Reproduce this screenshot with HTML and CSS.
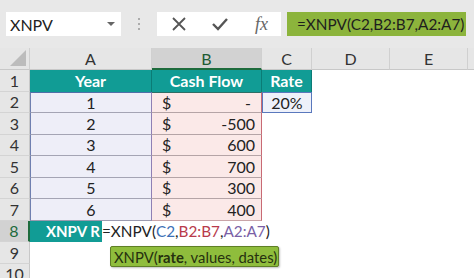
FILE: index.html
```html
<!DOCTYPE html>
<html>
<head>
    <meta charset="utf-8">
    <link rel="stylesheet" href="styles.css">
</head>
<body>
    <div class="toolbar">
        <div class="namebox">
            <span>XNPV</span>
            <span class="caret"></span>
        </div>
        <div class="grip"><i></i><i></i><i></i></div>
        <div class="fbuttons">
            <svg width="16" height="16" viewBox="0 0 16 16"><path d="M2 2 L14 14 M14 2 L2 14" stroke="#555" stroke-width="1.8" fill="none"/></svg>
            <svg width="18" height="16" viewBox="0 0 18 16"><path d="M2 8 L7 13 L16 3" stroke="#555" stroke-width="2.4" fill="none"/></svg>
            <span class="fx">fx</span>
        </div>
        <div class="formula">=XNPV(C2,B2:B7,A2:A7)</div>
    </div>

    <div class="sheet">
        <!-- column headers -->
        <div class="corner"><span class="tri"></span></div>
        <div class="colhead">A</div>
        <div class="colhead active">B</div>
        <div class="colhead">C</div>
        <div class="colhead">D</div>
        <div class="colhead">E</div>
        <div class="colhead last"></div>

        <!-- row 1 -->
        <div class="rowhead">1</div>
        <div class="cell title">Year</div>
        <div class="cell title">Cash Flow</div>
        <div class="cell title">Rate</div>
        <div class="cell"></div><div class="cell"></div><div class="cell"></div>

        <!-- row 2 -->
        <div class="rowhead">2</div>
        <div class="cell year first">1</div>
        <div class="cell cash first"><span>$</span><span>-&nbsp;</span></div>
        <div class="cell rate">20%</div>
        <div class="cell"></div><div class="cell"></div><div class="cell"></div>

        <div class="rowhead">3</div>
        <div class="cell year">2</div>
        <div class="cell cash"><span>$</span><span>-500</span></div>
        <div class="cell"></div><div class="cell"></div><div class="cell"></div><div class="cell"></div>

        <div class="rowhead">4</div>
        <div class="cell year">3</div>
        <div class="cell cash"><span>$</span><span>600</span></div>
        <div class="cell"></div><div class="cell"></div><div class="cell"></div><div class="cell"></div>

        <div class="rowhead">5</div>
        <div class="cell year">4</div>
        <div class="cell cash"><span>$</span><span>700</span></div>
        <div class="cell"></div><div class="cell"></div><div class="cell"></div><div class="cell"></div>

        <div class="rowhead">6</div>
        <div class="cell year">5</div>
        <div class="cell cash"><span>$</span><span>300</span></div>
        <div class="cell"></div><div class="cell"></div><div class="cell"></div><div class="cell"></div>

        <div class="rowhead">7</div>
        <div class="cell year lastrow">6</div>
        <div class="cell cash lastrow"><span>$</span><span>400</span></div>
        <div class="cell"></div><div class="cell"></div><div class="cell"></div><div class="cell"></div>

        <div class="rowhead active">8</div>
        <div class="cell label"><span>XNPV R</span></div>
        <div class="cell current"></div>
        <div class="cell"></div><div class="cell"></div><div class="cell"></div><div class="cell"></div>

        <div class="rowhead">9</div>
        <div class="cell"></div><div class="cell"></div><div class="cell"></div><div class="cell"></div><div class="cell"></div><div class="cell"></div>

        <div class="rowhead">10</div>
        <div class="cell"></div><div class="cell"></div><div class="cell"></div><div class="cell"></div><div class="cell"></div><div class="cell"></div>

        <!-- in-cell editor and argument tip -->
        <div class="editor">=XNPV(<span class="ref-c">C2</span>,<span class="ref-b">B2:B7</span>,<span class="ref-a">A2:A7</span>)</div>
        <div class="argtip">XNPV(<b>rate</b>, values, dates)</div>
    </div>
</body>
</html>
```

FILE: styles.css
```css
body {
    width: 474px;
    height: 278px;
    margin: 0;
    overflow: hidden;
    font-family: Lato, 'Noto Sans', sans-serif;
    font-size: 16px;
    color: #222;
    background: #fff;
}

.toolbar {
    height: 48px;
    background: #e8e8e8;
    display: flex;
    align-items: center;
    padding: 0 8px 0 6px;
    box-sizing: border-box;
}

.namebox {
    width: 115px;
    height: 24px;
    background: #fff;
    display: flex;
    align-items: center;
    justify-content: space-between;
    padding: 0 6px 0 4px;
    box-sizing: border-box;
    font-size: 16px;
    color: #222;
}

.caret {
    width: 0;
    height: 0;
    border-left: 4px solid transparent;
    border-right: 4px solid transparent;
    border-top: 4px solid #666;
}

.grip {
    width: 36px;
    display: flex;
    flex-direction: column;
    align-items: center;
    gap: 3px;
}

.grip i {
    width: 2px;
    height: 2px;
    background: #999;
    border-radius: 1px;
}

.fbuttons {
    width: 124px;
    height: 24px;
    background: #fff;
    display: flex;
    align-items: center;
    padding-left: 14px;
    gap: 24px;
    box-sizing: border-box;
}

.fx {
    font-family: 'Liberation Serif', serif;
    font-style: italic;
    font-size: 18px;
    color: #666;
    margin-left: 2px;
}

.formula {
    margin-left: 6px;
    width: 179px;
    height: 24px;
    background: #8cb43c;
    color: #1e1e1e;
    display: flex;
    align-items: center;
    padding-left: 10px;
    box-sizing: border-box;
    white-space: nowrap;
    font-size: 15.3px;
}

.sheet {
    position: relative;
    display: grid;
    grid-template-columns: 30px 122px 110px 50px 78px 78px 1fr;
    grid-template-rows: 22px repeat(10, 21.5px);
}

.corner {
    background: #e6e6e6;
    border-right: 1px solid #d0d0d0;
    border-bottom: 1px solid #c8c8c8;
    box-sizing: border-box;
    position: relative;
}

.tri {
    position: absolute;
    right: 3px;
    bottom: 3px;
    width: 0;
    height: 0;
    border-left: 16px solid transparent;
    border-bottom: 16px solid #bcbcbc;
}

.colhead {
    background: #e6e6e6;
    border-right: 1px solid #d0d0d0;
    border-bottom: 1px solid #c8c8c8;
    box-sizing: border-box;
    display: flex;
    align-items: center;
    justify-content: center;
    color: #333;
}

.colhead.active {
    background: #d2d2d2;
    border-bottom: 2px solid #1d6b3c;
    color: #1d5b34;
}

.colhead.last {
    border-right: none;
}

.rowhead {
    background: #e6e6e6;
    border-right: 1px solid #c8c8c8;
    border-bottom: 1px solid #d4d4d4;
    box-sizing: border-box;
    display: flex;
    align-items: center;
    justify-content: center;
    color: #333;
}

.rowhead.active {
    background: #d2d2d2;
    border-right: 2px solid #1d6b3c;
    color: #1d6b3c;
}

.cell {
    box-sizing: border-box;
    display: flex;
    align-items: center;
    white-space: nowrap;
    overflow: hidden;
}

.title {
    background: #119c95;
    color: #fff;
    font-weight: bold;
    justify-content: center;
    border-right: 1px solid #0b7c76;
}

.year {
    background: #eeeef8;
    justify-content: center;
    border-left: 1px solid #6f7fb0;
    border-right: 1px solid #8f80b4;
    border-bottom: 1px solid #a4a4b4;
}

.cash {
    background: #fbe9e8;
    justify-content: space-between;
    padding: 0 6px 0 10px;
    border-right: 1px solid #c86a74;
    border-bottom: 1px solid #b5a4a6;
}

.first {
    border-top: 1px solid #4f6fa8;
}

.cash.first {
    border-top: 1px solid #2d6e66;
}

.lastrow {
    border-bottom: 1px solid #9b9bb0;
}

.cash.lastrow {
    border-bottom: 1px solid #c9a4a8;
}

.rate {
    background: #eef1fa;
    justify-content: center;
    border: 1px solid #5a78bd;
}

.label {
    background: #119c95;
    color: #fff;
    font-weight: bold;
    font-size: 15px;
    padding-left: 16px;
}

.current {
    border-bottom: 2px solid #1d6b3c;
}

.editor {
    position: absolute;
    left: 102px;
    top: 172.5px;
    width: 163px;
    height: 21px;
    background: #fff;
    display: flex;
    align-items: center;
    white-space: nowrap;
    color: #222;
    font-size: 15.3px;
}

.ref-c { color: #3b6fb6; }
.ref-b { color: #b83a4b; }
.ref-a { color: #7a5fa6; }

.argtip {
    position: absolute;
    left: 110px;
    top: 198px;
    width: 169px;
    height: 21px;
    background: #8fbd3c;
    border: 1px solid #5f7f26;
    border-radius: 2px;
    box-sizing: border-box;
    box-shadow: 1px 1px 2px rgba(0,0,0,0.25);
    display: flex;
    align-items: center;
    padding-left: 3px;
    white-space: nowrap;
    color: #26310f;
    font-size: 14.8px;
}
```
